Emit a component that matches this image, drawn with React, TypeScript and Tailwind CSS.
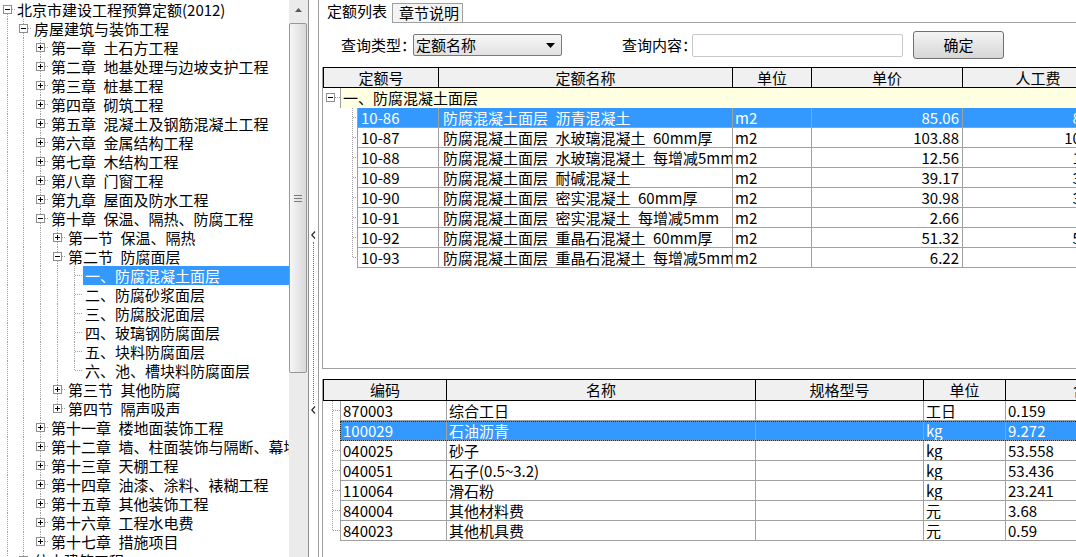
import React from "react";

const DOT = "#a0a0a0";

type ConnProps = {
  w: number;
  h: number;
  cx: number;
  cy: number;
  up?: boolean;
  down?: boolean;
  right?: boolean;
  box?: "+" | "-";
};

function Conn({ w, h, cx, cy, up, down, right, box }: ConnProps) {
  const x = cx + 0.5;
  const y = cy + 0.5;
  return (
    <svg width={w} height={h} className="block shrink-0" shapeRendering="crispEdges">
      {up && <line x1={x} y1={0} x2={x} y2={box ? cy - 4 : cy + 1} stroke={DOT} strokeDasharray="1 1" />}
      {down && <line x1={x} y1={box ? cy + 5 : cy + 1} x2={x} y2={h} stroke={DOT} strokeDasharray="1 1" />}
      {right && <line x1={box ? cx + 5 : cx + 1} y1={y} x2={w} y2={y} stroke={DOT} strokeDasharray="1 1" />}
      {box && (
        <>
          <rect x={cx - 4 + 0.5} y={cy - 4 + 0.5} width={8} height={8} fill="#ffffff" stroke="#8f8f8f" />
          <line x1={cx - 2} y1={y} x2={cx + 3} y2={y} stroke="#000000" />
          {box === "+" && <line x1={x} y1={cy - 2} x2={x} y2={cy + 3} stroke="#000000" />}
        </>
      )}
    </svg>
  );
}

type TNode = { label: string; level: number; exp?: "+" | "-"; sel?: boolean };

const S = "\u2002";

const tree: TNode[] = [
  { label: "北京市建设工程预算定额(2012)", level: 0, exp: "-" },
  { label: "房屋建筑与装饰工程", level: 1, exp: "-" },
  { label: `第一章${S}土石方工程`, level: 2, exp: "+" },
  { label: `第二章${S}地基处理与边坡支护工程`, level: 2, exp: "+" },
  { label: `第三章${S}桩基工程`, level: 2, exp: "+" },
  { label: `第四章${S}砌筑工程`, level: 2, exp: "+" },
  { label: `第五章${S}混凝土及钢筋混凝土工程`, level: 2, exp: "+" },
  { label: `第六章${S}金属结构工程`, level: 2, exp: "+" },
  { label: `第七章${S}木结构工程`, level: 2, exp: "+" },
  { label: `第八章${S}门窗工程`, level: 2, exp: "+" },
  { label: `第九章${S}屋面及防水工程`, level: 2, exp: "+" },
  { label: `第十章${S}保温、隔热、防腐工程`, level: 2, exp: "-" },
  { label: `第一节${S}保温、隔热`, level: 3, exp: "+" },
  { label: `第二节${S}防腐面层`, level: 3, exp: "-" },
  { label: "一、防腐混凝土面层", level: 4, sel: true },
  { label: "二、防腐砂浆面层", level: 4 },
  { label: "三、防腐胶泥面层", level: 4 },
  { label: "四、玻璃钢防腐面层", level: 4 },
  { label: "五、块料防腐面层", level: 4 },
  { label: "六、池、槽块料防腐面层", level: 4 },
  { label: `第三节${S}其他防腐`, level: 3, exp: "+" },
  { label: `第四节${S}隔声吸声`, level: 3, exp: "+" },
  { label: `第十一章${S}楼地面装饰工程`, level: 2, exp: "+" },
  { label: `第十二章${S}墙、柱面装饰与隔断、幕墙工程`, level: 2, exp: "+" },
  { label: `第十三章${S}天棚工程`, level: 2, exp: "+" },
  { label: `第十四章${S}油漆、涂料、裱糊工程`, level: 2, exp: "+" },
  { label: `第十五章${S}其他装饰工程`, level: 2, exp: "+" },
  { label: `第十六章${S}工程水电费`, level: 2, exp: "+" },
  { label: `第十七章${S}措施项目`, level: 2, exp: "+" },
  { label: "仿古建筑工程", level: 1, exp: "+" },
  { label: "通用安装工程", level: 1, exp: "+" },
  { label: "北京市房屋修缮工程预算定额", level: 0, exp: "+" },
];

function cont(i: number, k: number): boolean {
  for (let j = i + 1; j < tree.length; j++) {
    if (tree[j].level < k) return false;
    if (tree[j].level === k) return true;
  }
  return false;
}

function Tree() {
  return (
    <div className="w-[289px] shrink-0 overflow-hidden">
      {tree.map((n, i) => {
        const guides = [];
        for (let k = 0; k < n.level; k++) {
          const c = cont(i, k);
          guides.push(
            <Conn key={k} w={k === 0 ? 15 : 17} h={19} cx={k === 0 ? 7 : 8} cy={9} up={c} down={c} />
          );
        }
        return (
          <div key={i} className="flex h-[19px]">
            {guides}
            <Conn
              w={n.level === 0 ? 15 : 17}
              h={19}
              cx={n.level === 0 ? 7 : 8}
              cy={9}
              up={i > 0}
              down={cont(i, n.level)}
              right
              box={n.exp}
            />
            <div
              className={`flex-1 whitespace-pre pl-[2px] leading-[19px] ${
                n.sel ? "bg-[#3399ff] text-white" : ""
              }`}
            >
              {n.label}
            </div>
          </div>
        );
      })}
    </div>
  );
}

function Scrollbar() {
  return (
    <div className="flex w-[19px] shrink-0 flex-col bg-[#ebebeb]">
      <div className="flex h-[19px] items-center justify-center">
        <svg width="7" height="4" className="block">
          <polygon points="3.5,0 7,4 0,4" fill="#5a5a5a" />
        </svg>
      </div>
      <div className="mt-[4px] mr-[1px] flex h-[350px] items-center justify-center rounded-[2px] border border-[#979797] bg-linear-to-r from-[#f6f6f6] to-[#d9d9d9]">
        <svg width="8" height="7" className="block" shapeRendering="crispEdges">
          <line x1="0" y1="0.5" x2="8" y2="0.5" stroke="#7a7a7a" />
          <line x1="0" y1="3.5" x2="8" y2="3.5" stroke="#7a7a7a" />
          <line x1="0" y1="6.5" x2="8" y2="6.5" stroke="#7a7a7a" />
        </svg>
      </div>
    </div>
  );
}

function Chevron() {
  return (
    <svg width="5" height="8" className="block">
      <polyline points="4,0.5 0.8,4 4,7.5" fill="none" stroke="#2a2a2a" strokeWidth="1.2" />
    </svg>
  );
}

function Splitter() {
  return (
    <div className="flex w-[9px] shrink-0 flex-col items-center bg-white pt-[231px]">
      <Chevron />
      <div className="mt-[3px] h-[162px] border-l border-dotted border-[#6a6a6a]" />
      <div className="mt-[2px]">
        <Chevron />
      </div>
    </div>
  );
}

type Quota = { code: string; name: string; unit: string; price: string; labor: string };

const quotas: Quota[] = [
  { code: "10-86", name: `防腐混凝土面层${S}沥青混凝土`, unit: "m2", price: "85.06", labor: "80.89" },
  { code: "10-87", name: `防腐混凝土面层${S}水玻璃混凝土${S}60mm厚`, unit: "m2", price: "103.88", labor: "101.25" },
  { code: "10-88", name: `防腐混凝土面层${S}水玻璃混凝土${S}每增减5mm`, unit: "m2", price: "12.56", labor: "11.73" },
  { code: "10-89", name: `防腐混凝土面层${S}耐碱混凝土`, unit: "m2", price: "39.17", labor: "35.62" },
  { code: "10-90", name: `防腐混凝土面层${S}密实混凝土${S}60mm厚`, unit: "m2", price: "30.98", labor: "30.14" },
  { code: "10-91", name: `防腐混凝土面层${S}密实混凝土${S}每增减5mm`, unit: "m2", price: "2.66", labor: "2.51" },
  { code: "10-92", name: `防腐混凝土面层${S}重晶石混凝土${S}60mm厚`, unit: "m2", price: "51.32", labor: "50.47" },
  { code: "10-93", name: `防腐混凝土面层${S}重晶石混凝土${S}每增减5mm`, unit: "m2", price: "6.22", labor: "5.88" },
];

type Mat = { code: string; name: string; spec: string; unit: string; qty: string };

const mats: Mat[] = [
  { code: "870003", name: "综合工日", spec: "", unit: "工日", qty: "0.159" },
  { code: "100029", name: "石油沥青", spec: "", unit: "kg", qty: "9.272" },
  { code: "040025", name: "砂子", spec: "", unit: "kg", qty: "53.558" },
  { code: "040051", name: "石子(0.5~3.2)", spec: "", unit: "kg", qty: "53.436" },
  { code: "110064", name: "滑石粉", spec: "", unit: "kg", qty: "23.241" },
  { code: "840004", name: "其他材料费", spec: "", unit: "元", qty: "3.68" },
  { code: "840023", name: "其他机具费", spec: "", unit: "元", qty: "0.59" },
];

const hcell = "shrink-0 border-r border-black text-center leading-[19px] whitespace-pre overflow-hidden";
const dcell = "shrink-0 border-l border-b border-[#a0a0a0] leading-[19px] whitespace-pre overflow-hidden";

function TopGrid() {
  return (
    <div className="mt-[8px] ml-[3px] h-[302px] shrink-0 overflow-hidden border-b border-l border-[#a0a0a0]">
      <div className="flex h-[21px] w-max border-y border-l border-black bg-[#f0f0f0]">
        <div className={`${hcell} w-[115px]`}>定额号</div>
        <div className={`${hcell} w-[294px]`}>定额名称</div>
        <div className={`${hcell} w-[79px]`}>单位</div>
        <div className={`${hcell} w-[151px]`}>单价</div>
        <div className={`${hcell} w-[151px]`}>人工费</div>
        <div className={`${hcell} w-[150px]`}>材料费</div>
      </div>
      <div className="flex h-[20px] w-max">
        <Conn w={17} h={20} cx={7} cy={9} right box="-" />
        <div className="w-[900px] shrink-0 border-l border-[#a0a0a0] bg-[#ffffe1] pl-[2px] leading-[19px]">
          一、防腐混凝土面层
        </div>
      </div>
      {quotas.map((q, i) => {
        const sel = i === 0;
        const tone = sel ? "bg-[#3399ff] text-white" : "";
        return (
          <div key={q.code} className="flex h-[20px] w-max">
            <Conn w={34} h={20} cx={29} cy={9} up down={i < quotas.length - 1} right />
            <div className={`${dcell} ${tone} w-[81px] pl-[3px]`}>{q.code}</div>
            <div className={`${dcell} ${tone} w-[294px] pl-[4px]`}>{q.name}</div>
            <div className={`${dcell} ${tone} w-[79px] pl-[2px]`}>{q.unit}</div>
            <div className={`${dcell} ${tone} w-[151px] pr-[3px] text-right`}>{q.price}</div>
            <div className={`${dcell} ${tone} w-[151px] pr-[3px] text-right`}>{q.labor}</div>
            <div className={`${dcell} ${tone} w-[150px]`}></div>
          </div>
        );
      })}
    </div>
  );
}

function BottomGrid() {
  return (
    <div className="mt-[10px] ml-[3px] min-h-0 flex-1 overflow-hidden border-l border-[#a0a0a0]">
      <div className="flex h-[22px] w-max border-y border-l border-black bg-[#f0f0f0]">
        <div className={`${hcell} w-[123px] leading-[20px]`}>编码</div>
        <div className={`${hcell} w-[309px] leading-[20px]`}>名称</div>
        <div className={`${hcell} w-[168px] leading-[20px]`}>规格型号</div>
        <div className={`${hcell} w-[82px] leading-[20px]`}>单位</div>
        <div className={`${hcell} w-[165px] leading-[20px]`}>含量</div>
      </div>
      {mats.map((m, i) => {
        const sel = i === 1;
        return (
          <div key={m.code} className="flex h-[20px] w-max">
            <Conn w={17} h={20} cx={9} cy={9} up down={i < mats.length - 1} right />
            <div
              className={`flex ${
                sel ? "bg-[#3399ff] text-white outline-1 -outline-offset-1 outline-dotted outline-[#2b2b2b]" : ""
              }`}
            >
              <div className={`${dcell} w-[106px] pl-[2px]`}>{m.code}</div>
              <div className={`${dcell} w-[309px] pl-[2px]`}>{m.name}</div>
              <div className={`${dcell} w-[168px] pl-[2px]`}>{m.spec}</div>
              <div className={`${dcell} w-[82px] pl-[2px]`}>{m.unit}</div>
              <div className={`${dcell} w-[165px] pl-[2px]`}>{m.qty}</div>
            </div>
          </div>
        );
      })}
    </div>
  );
}

function QueryBar() {
  return (
    <div className="mt-[8px] flex h-[28px] shrink-0 items-center pl-[22px]">
      <div className="w-[72px] shrink-0 whitespace-pre">查询类型：</div>
      <div className="flex h-[22px] w-[149px] shrink-0 items-center justify-between rounded-[2px] border border-[#7a7a7a] bg-linear-to-b from-[#f7f7f7] to-[#e1e1e1] pr-[6px] pl-[2px]">
        <span className="leading-[20px]">定额名称</span>
        <svg width="9" height="5" className="block">
          <polygon points="0,0 9,0 4.5,5" fill="#000000" />
        </svg>
      </div>
      <div className="ml-[60px] w-[70px] shrink-0 whitespace-pre">查询内容：</div>
      <div className="h-[23px] w-[211px] shrink-0 rounded-[2px] border border-[#c8c8c8] bg-white" />
      <div className="ml-[10px] flex h-[28px] w-[91px] shrink-0 items-center justify-center rounded-[3px] border border-[#707070] bg-linear-to-b from-[#f4f4f4] to-[#d6d6d6]">
        确定
      </div>
    </div>
  );
}

function Tabs() {
  return (
    <div className="flex h-[23px] shrink-0 items-end">
      <div className="h-[23px] w-[73px] shrink-0 bg-white pl-[8px] leading-[22px]">定额列表</div>
      <div className="h-[20px] w-[71px] shrink-0 border border-[#a0a0a0] bg-[#f4f4f4] pl-[6px] leading-[18px]">
        章节说明
      </div>
      <div className="h-[23px] flex-1 border-b border-[#a0a0a0]" />
    </div>
  );
}

export default function App() {
  return (
    <div className="flex h-[557px] w-[1076px] overflow-hidden bg-white font-['Noto_Sans_CJK_SC','Noto_Sans_CJK_JP',sans-serif] text-[15px] text-black">
      <div className="flex w-[309px] shrink-0 border-r border-[#8e8e8e]">
        <Tree />
        <Scrollbar />
      </div>
      <Splitter />
      <div className="flex min-w-0 flex-1 flex-col overflow-hidden border-l border-[#a0a0a0]">
        <Tabs />
        <QueryBar />
        <TopGrid />
        <BottomGrid />
      </div>
    </div>
  );
}
